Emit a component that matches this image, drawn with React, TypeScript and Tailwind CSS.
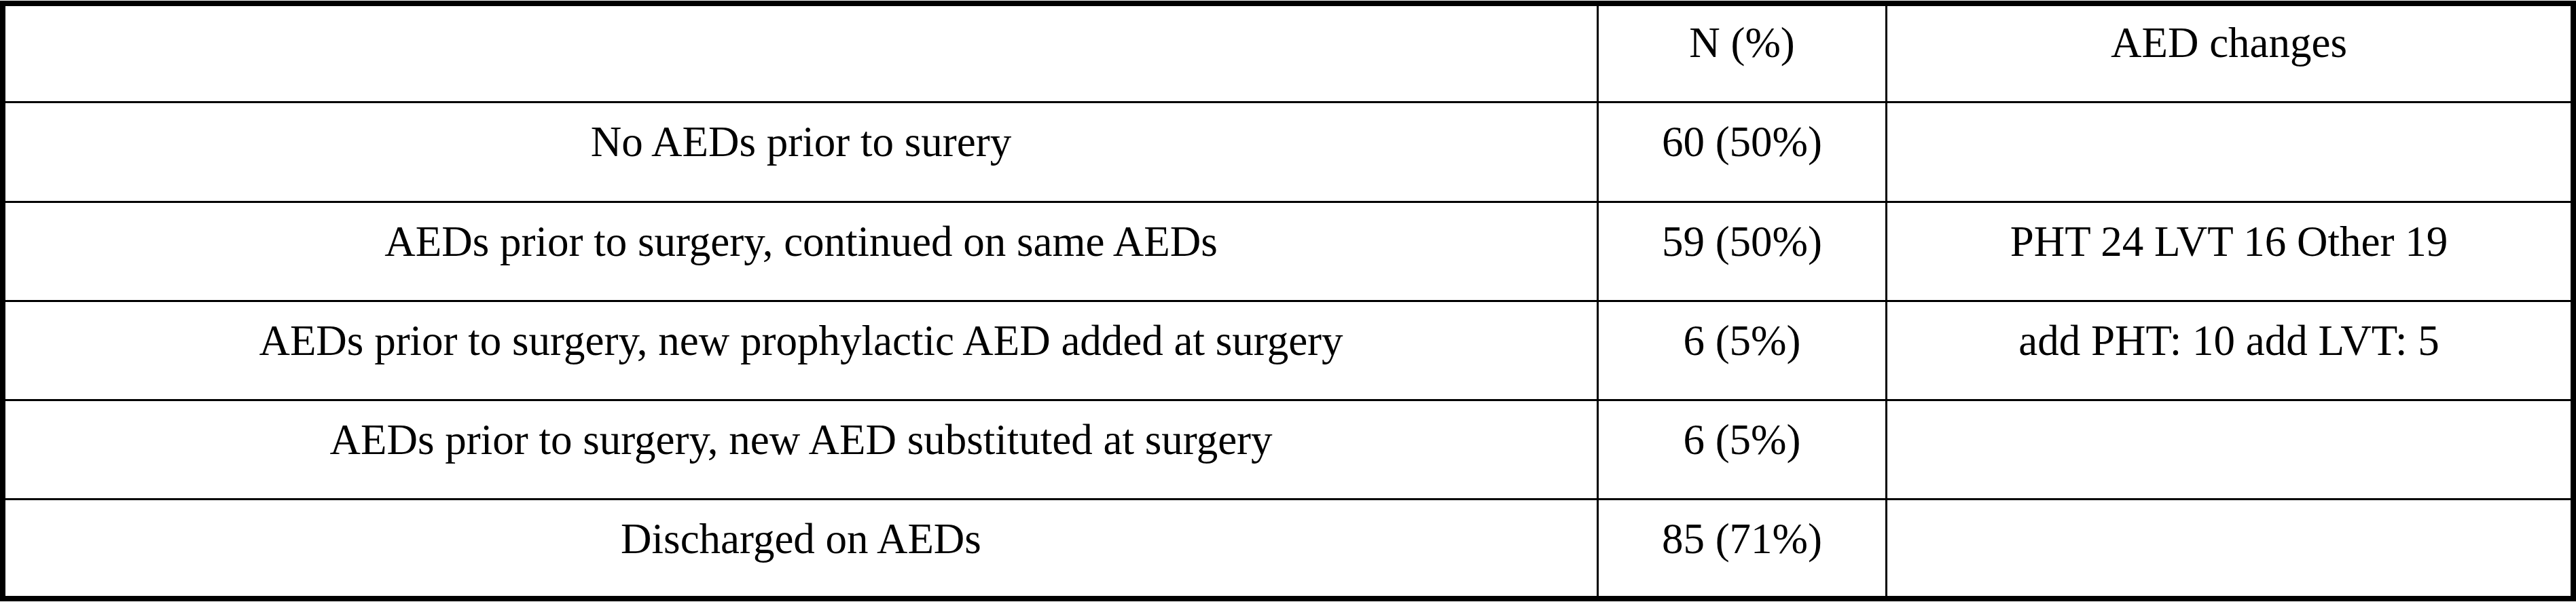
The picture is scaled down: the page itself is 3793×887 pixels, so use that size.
import React from "react";

const rows: [string, string, string][] = [
  ["No AEDs prior to surery", "60 (50%)", ""],
  ["AEDs prior to surgery, continued on same AEDs", "59 (50%)", "PHT 24 LVT 16 Other 19"],
  ["AEDs prior to surgery, new prophylactic AED added at surgery", "6 (5%)", "add PHT: 10 add LVT: 5"],
  ["AEDs prior to surgery, new AED substituted at surgery", "6 (5%)", ""],
  ["Discharged on AEDs", "85 (71%)", ""],
];

const heights = ["h-[147px]", "h-[146px]", "h-[146px]", "h-[146px]", "h-[144px]"];

export default function App() {
  return (
    <div
      className="w-[3793px] h-[887px] bg-white pt-[1px] text-black"
      style={{ fontFamily: '"Liberation Serif", "Times New Roman", serif' }}
    >
      <div className="w-[3793px] h-[885px] border-[8px] border-black flex flex-col text-[63px] leading-[63px]">
        <div className="flex h-[140px] shrink-0">
          <div className="w-[2343px] shrink-0" />
          <div className="w-[425px] shrink-0 border-l-[3px] border-black text-center pt-[23px]">N (%)</div>
          <div className="flex-1 border-l-[3px] border-black text-center pt-[23px]">AED changes</div>
        </div>
        {rows.map((r, i) => (
          <div key={i} className={`flex shrink-0 border-t-[3px] border-black ${heights[i]}`}>
            <div className="w-[2343px] shrink-0 text-center pt-[26px]">{r[0]}</div>
            <div className="w-[425px] shrink-0 border-l-[3px] border-black text-center pt-[26px]">{r[1]}</div>
            <div className="flex-1 border-l-[3px] border-black text-center pt-[26px]">{r[2]}</div>
          </div>
        ))}
      </div>
    </div>
  );
}
